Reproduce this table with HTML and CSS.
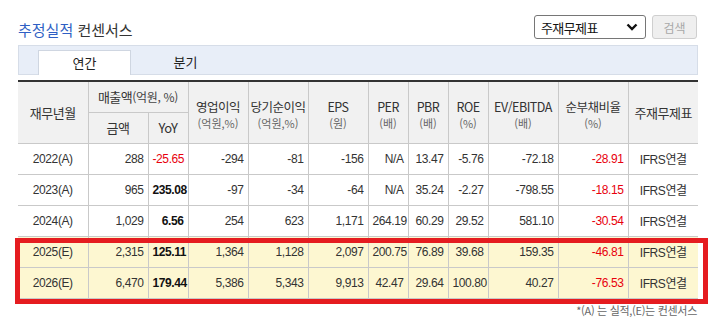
FILE: index.html
```html
<!DOCTYPE html>
<html lang="ko">
<head>
<meta charset="utf-8">
<title>추정실적 컨센서스</title>
<link rel="stylesheet" href="styles.css">
</head>
<body>
<div class="wrap">
  <div class="head">
    <h2 class="title"><span class="blue">추정실적</span> 컨센서스</h2>
    <div class="controls">
      <div class="select">
        <span>주재무제표</span>
        <svg class="chev" width="12" height="8" viewBox="0 0 12 8"><polyline points="1.5,1.5 6,6 10.5,1.5" fill="none" stroke="#111" stroke-width="2.4"/></svg>
      </div>
      <button class="btn" type="button">검색</button>
    </div>
  </div>

  <div class="tabbar">
    <div class="tab active">연간</div>
    <div class="tab">분기</div>
  </div>

  <div class="tablewrap">
    <table class="grid">
      <colgroup>
        <col style="width:70px"><col style="width:60px"><col style="width:40px"><col style="width:60px"><col style="width:60px"><col style="width:60px"><col style="width:40px"><col style="width:40px"><col style="width:40px"><col style="width:70px"><col style="width:70px"><col style="width:70px">
      </colgroup>
      <thead>
        <tr>
          <th rowspan="2">재무년월</th>
          <th colspan="2">매출액<span class="unit-in">(억원, %)</span></th>
          <th rowspan="2" class="two"><span class="l1">영업이익</span><span class="unit">(억원,%)</span></th>
          <th rowspan="2" class="two"><span class="l1">당기순이익</span><span class="unit">(억원,%)</span></th>
          <th rowspan="2" class="two"><span class="l1">EPS</span><span class="unit">(원)</span></th>
          <th rowspan="2" class="two"><span class="l1">PER</span><span class="unit">(배)</span></th>
          <th rowspan="2" class="two"><span class="l1">PBR</span><span class="unit">(배)</span></th>
          <th rowspan="2" class="two"><span class="l1">ROE</span><span class="unit">(%)</span></th>
          <th rowspan="2" class="two"><span class="l1">EV/EBITDA</span><span class="unit">(배)</span></th>
          <th rowspan="2" class="two"><span class="l1">순부채비율</span><span class="unit">(%)</span></th>
          <th rowspan="2">주재무제표</th>
        </tr>
        <tr>
          <th>금액</th>
          <th>YoY</th>
        </tr>
      </thead>
      <tbody>
        <tr>
          <td class="c">2022(A)</td><td>288</td><td class="neg">-25.65</td><td>-294</td><td>-81</td><td>-156</td><td>N/A</td><td>13.47</td><td>-5.76</td><td>-72.18</td><td class="neg">-28.91</td><td class="c">IFRS연결</td>
        </tr>
        <tr>
          <td class="c">2023(A)</td><td>965</td><td class="b">235.08</td><td>-97</td><td>-34</td><td>-64</td><td>N/A</td><td>35.24</td><td>-2.27</td><td>-798.55</td><td class="neg">-18.15</td><td class="c">IFRS연결</td>
        </tr>
        <tr>
          <td class="c">2024(A)</td><td>1,029</td><td class="b">6.56</td><td>254</td><td>623</td><td>1,171</td><td>264.19</td><td>60.29</td><td>29.52</td><td>581.10</td><td class="neg">-30.54</td><td class="c">IFRS연결</td>
        </tr>
        <tr class="est">
          <td class="c">2025(E)</td><td>2,315</td><td class="b">125.11</td><td>1,364</td><td>1,128</td><td>2,097</td><td>200.75</td><td>76.89</td><td>39.68</td><td>159.35</td><td class="neg">-46.81</td><td class="c">IFRS연결</td>
        </tr>
        <tr class="est">
          <td class="c">2026(E)</td><td>6,470</td><td class="b">179.44</td><td>5,386</td><td>5,343</td><td>9,913</td><td>42.47</td><td>29.64</td><td>100.80</td><td>40.27</td><td class="neg">-76.53</td><td class="c">IFRS연결</td>
        </tr>
      </tbody>
    </table>
    <div class="highlight"></div>
  </div>
  <p class="note">*(A) 는 실적,(E)는 컨센서스</p>
</div>
</body>
</html>
```

FILE: styles.css
```css
* { box-sizing: border-box; }
html, body { margin: 0; padding: 0; background: #fff; }
body {
  font-family: "Liberation Sans", "Noto Sans CJK KR", sans-serif;
  color: #333;
  font-size: 12px;
}
.wrap {
  width: 680px;
  margin-left: 18px;
}
.head {
  display: flex;
  justify-content: space-between;
  align-items: flex-start;
  margin-top: 15px;
  height: 24px;
}
.title {
  margin: 5px 0 0;
  font-size: 15px;
  font-weight: normal;
  line-height: 20px;
  letter-spacing: 0;
  color: #333;
  font-family: "Noto Sans CJK KR", sans-serif;
}
.title .blue { color: #2f5fc4; }
.controls {
  display: flex;
  gap: 6px;
  margin-right: 1px;
}
.select {
  width: 112px;
  height: 24px;
  border: 1px solid #767676;
  border-radius: 3px;
  display: flex;
  align-items: center;
  justify-content: space-between;
  padding: 0 7px 0 6px;
  font-family: "Noto Sans CJK KR", sans-serif;
  font-size: 13px;
  color: #111;
  letter-spacing: -0.6px;
}
.chev { display: block; }
.btn {
  width: 45px;
  height: 24px;
  border: 1px solid #cfcfcf;
  border-radius: 3px;
  background: #efefef;
  color: #a8a8a8;
  font-family: "Noto Sans CJK KR", sans-serif;
  font-size: 12px;
  padding: 0;
}
.tabbar {
  margin-top: 6px;
  height: 30px;
  border: 1px solid #d6dde8;
  background: #e8eef8;
  display: flex;
  align-items: flex-end;
  padding-left: 19px;
  gap: 8px;
}
.tab {
  width: 93px;
  height: 25px;
  margin-bottom: -1px;
  text-align: center;
  line-height: 23px;
  font-family: "Noto Sans CJK KR", sans-serif;
  font-size: 13px;
  color: #222;
}
.tab.active {
  background: #fff;
  border: 1px solid #cfd6e1;
  border-bottom: none;
}
.tablewrap {
  position: relative;
  margin-top: 5px;
}
.grid {
  width: 680px;
  border-collapse: collapse;
  table-layout: fixed;
  border-top: 2px solid #333;
}
.grid th, .grid td {
  border: 1px solid #c9c9c9;
  height: 31px;
  padding: 0 4px;
  white-space: nowrap;
}
.grid tr > :first-child { border-left: none; }
.grid tr > :last-child { border-right: none; }
.grid thead tr:last-child th:first-child { border-left: 1px solid #c9c9c9; }
.grid th {
  background: #f1f1f1;
  font-weight: normal;
  font-family: "Noto Sans CJK KR", sans-serif;
  font-size: 13px;
  letter-spacing: -0.5px;
  color: #333;
  line-height: 15px;
  text-align: center;
  vertical-align: middle;
  padding: 0 1px;
}
.grid th.two { padding-top: 5px; }
.grid th.two .l1,
.grid th.two .unit { display: block; line-height: 17px; }
.grid th.two .l1 { font-size: 12.5px; }
.grid th.two .unit {
  font-size: 11px;
  color: #666;
  letter-spacing: 0;
}
.grid th .unit-in {
  font-size: 12px;
  color: #444;
  letter-spacing: -0.3px;
}
.grid td {
  text-align: right;
  letter-spacing: -0.4px;
  color: #333;
  font-size: 12px;
}
.grid td.c {
  text-align: center;
  font-family: "Liberation Sans", "Noto Sans CJK KR", sans-serif;
}
.grid td.neg { color: #e8000d; }
.grid td.b { font-weight: bold; color: #111; }
.grid tr.est td { background: #fdf7d1; }
.highlight {
  position: absolute;
  left: -3px;
  top: 158px;
  width: 693px;
  height: 66px;
  border: 5px solid #e51c20;
  pointer-events: none;
}
.note {
  margin: 4px 1px 0 0;
  text-align: right;
  font-family: "Noto Sans CJK KR", sans-serif;
  font-size: 11px;
  line-height: 14px;
  color: #666;
  letter-spacing: -0.3px;
}
```
